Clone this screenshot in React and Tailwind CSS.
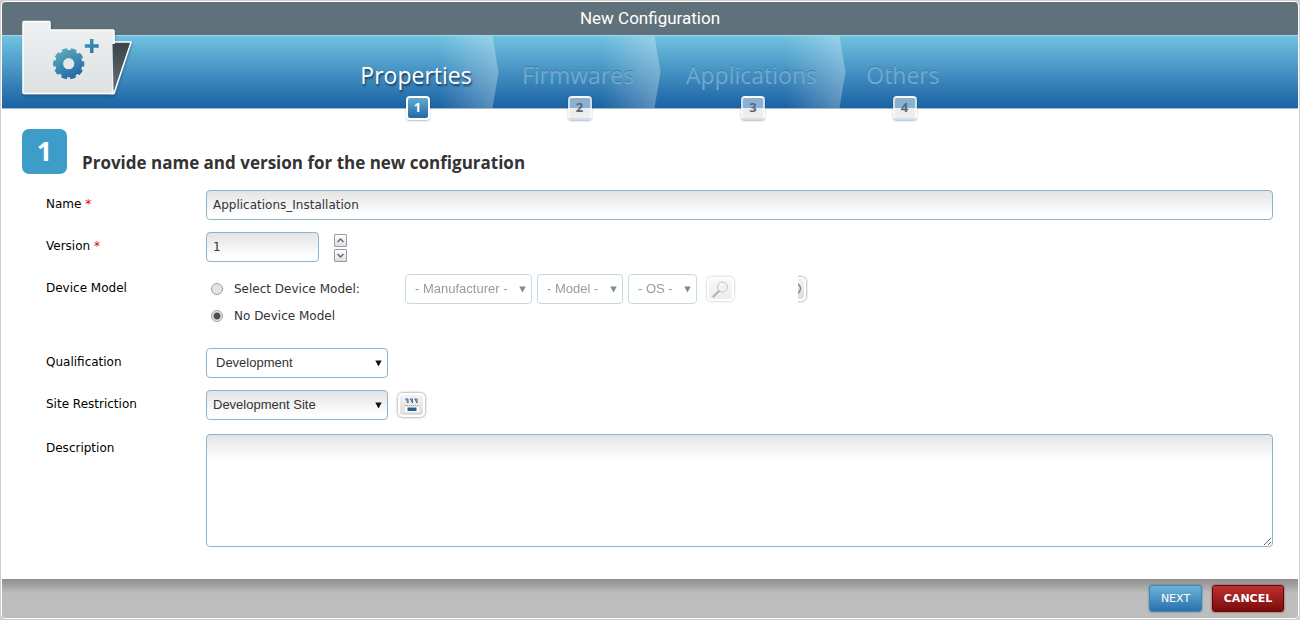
import React, { useState } from "react";
import clsx from "clsx";

const STEPS = [
    { id: 1, title: "Properties", width: "w-[162px]" },
    { id: 2, title: "Firmwares", width: "w-[162px]" },
    { id: 3, title: "Applications", width: "w-[185px]" },
    { id: 4, title: "Others", width: "w-[118px]" },
];

const fieldClass =
    "rounded-[4px] border border-[#8db4c8] bg-white bg-linear-to-b from-[#e4e4e4] to-white to-[24px] text-[#333] outline-none";

const FolderIcon = () => (
    <svg className="absolute left-[20px] top-[17px]" width="116" height="84" viewBox="0 0 116 84" aria-hidden="true">
        <defs>
            <linearGradient id="front" x1="0" y1="0" x2="0" y2="1">
                <stop offset="0" stopColor="#eff1f2" />
                <stop offset="1" stopColor="#dde1e2" />
            </linearGradient>
            <linearGradient id="back" x1="0" y1="0" x2="0" y2="1">
                <stop offset="0" stopColor="#39444b" />
                <stop offset="1" stopColor="#647078" />
            </linearGradient>
            <linearGradient id="gear" x1="38" y1="29" x2="54" y2="60" gradientUnits="userSpaceOnUse">
                <stop offset="0" stopColor="#5ab0b8" />
                <stop offset="1" stopColor="#2162a6" />
            </linearGradient>
            <linearGradient id="plus" x1="63" y1="20" x2="77" y2="34" gradientUnits="userSpaceOnUse">
                <stop offset="0" stopColor="#3e9ab8" />
                <stop offset="1" stopColor="#2f6fa4" />
            </linearGradient>
            <filter id="shade" x="-10%" y="-10%" width="120%" height="125%">
                <feDropShadow dx="0" dy="2" stdDeviation="1.5" floodColor="#0b3355" floodOpacity="0.5" />
            </filter>
        </defs>
        <g filter="url(#shade)" stroke="#fff" strokeWidth="1.5" strokeLinejoin="round">
            <path d="M91 23h18L92 74.500h-3z" fill="url(#back)" />
            <path d="M1 3.500q0-1 1-1h25q1 0 1 1V11h63q1 0 1 1v12l-1 50.500H2q-1 0-1-1z" fill="url(#front)" />
        </g>
        <path d="M90.500 25h17L91.500 72z" fill="url(#back)" />
        {/* gear body, then its ten teeth as a dashed ring */}
        <circle cx="46.700" cy="44.700" r="9.600" fill="none" stroke="url(#gear)" strokeWidth="8" />
        <circle
            cx="46.700"
            cy="44.700"
            r="14"
            fill="none"
            stroke="url(#gear)"
            strokeWidth="3.200"
            strokeDasharray="5.600 3.196"
            strokeDashoffset="2.800"
        />
        <path d="M68 20h3.500v5.200h5.200v3.500h-5.200v5.200H68v-5.200h-5.200v-3.500H68z" fill="url(#plus)" />
    </svg>
);

const Step = ({ step, active, last }) => (
    <li className={clsx("relative flex justify-center pt-[23px]", step.width)}>
        {!last && (
            <span className="absolute inset-y-0 right-0 w-[60px] bg-linear-to-r from-white/0 to-white/30 [clip-path:polygon(0_0,54px_0,100%_50%,54px_100%,0_100%)]" />
        )}
        <a
            href={`#step-${step.id}`}
            aria-current={active ? "step" : undefined}
            className={clsx(
                "relative pr-[3px] font-['Open_Sans',sans-serif] text-[23px] leading-8",
                active ? "text-white [text-shadow:1px_2px_2px_#173f63]" : "text-[#6fa9ce] [text-shadow:0_-1px_0_#3d7fae]"
            )}
        >
            {step.title}
        </a>
        <span
            className={clsx(
                "absolute -bottom-3 left-1/2 -ml-3 flex h-6 w-6 items-center justify-center rounded-[4px] border-2 font-['Open_Sans',sans-serif] text-[13px] font-bold shadow-[0_1px_2px_#0004]",
                active
                    ? "border-white bg-linear-to-b from-[#62abcf] to-[#2269a8] text-white"
                    : "border-white/60 bg-linear-to-b from-[#8bb0d2] from-50% to-[#eee] to-50% text-[#56697c]"
            )}
        >
            {step.id}
        </span>
    </li>
);

const Select = ({ label, id, value, className, wrapClass, disabled }) => (
    <span className={clsx("relative block", wrapClass, disabled && "opacity-50")}>
        <select
            id={id}
            aria-label={label}
            disabled={disabled}
            defaultValue={value}
            className={clsx(
                "block h-[30px] w-full appearance-none rounded-[4px] border border-[#8db4c8] font-['Liberation_Sans',sans-serif] text-[13px] text-[#333] outline-none",
                className
            )}
        >
            <option>{value}</option>
        </select>
        <svg className="pointer-events-none absolute right-[6px] top-3 h-[7px] w-[7px]" viewBox="0 0 7 7" aria-hidden="true">
            <path d="M.3 .5h6.400L3.500 6.500z" fill="#111" />
        </svg>
    </span>
);

const IconButton = ({ label, disabled, children }) => (
    <button
        type="button"
        aria-label={label}
        disabled={disabled}
        className={clsx(
            "flex h-6 w-[27px] shrink-0 items-center justify-center rounded-[5px] border-2 border-white bg-linear-to-b from-[#f4f4f4] to-[#dcdcdc] shadow-[0_0_2px_1px_#0004]",
            disabled && "opacity-50"
        )}
    >
        {children}
    </button>
);

const SpinButton = ({ label, onClick, path }) => (
    <button
        type="button"
        aria-label={label}
        onClick={onClick}
        className="flex h-[13px] w-[13px] items-center justify-center rounded-[1px] border border-[#9a9aa6] bg-linear-to-b from-white to-[#dddde4]"
    >
        <svg width="7" height="5" viewBox="0 0 7 5" fill="none" stroke="#666672" strokeWidth="1.400" aria-hidden="true">
            <path d={path} />
        </svg>
    </button>
);

const Row = ({ label, htmlFor, required, className, children }) => (
    <div className={clsx("flex items-start", className)}>
        <label htmlFor={htmlFor} className="w-[160px] shrink-0 pt-1 leading-5 text-black">
            {label} {required && <span className="text-[#d00]">*</span>}
        </label>
        <div className="flex min-w-0 flex-1 items-center">{children}</div>
    </div>
);

const radioClass =
    "ml-[5px] mr-[11px] h-3 w-3 appearance-none rounded-full border border-[#a0a0a0] bg-[#e4e4e4] checked:bg-[radial-gradient(circle,#505050_3px,#e8e8e8_4px)]";

const App = () => {
    const [name, setName] = useState("Applications_Installation");
    const [version, setVersion] = useState(1);
    const [hasModel, setHasModel] = useState(false);

    return (
        <div className="flex min-h-screen flex-col bg-[#cfcfcf] p-px font-['DejaVu_Sans',sans-serif] text-[12px]">
            <div className="flex flex-1 flex-col overflow-hidden rounded-[5px] border border-white bg-white">
                <header className="relative">
                    <h1 className="bg-[#5f717a] text-center font-[Roboto,sans-serif] text-[17px] leading-[33px] text-white">
                        New Configuration
                    </h1>
                    <nav className="border-y border-t-[#a5d5e8] border-b-[#a9b9c8] bg-linear-to-b from-[#70c2e0] to-[#1a62a3]">
                        <ol className="flex h-[72px] justify-center">
                            {STEPS.map(step => (
                                <Step key={step.id} step={step} active={step.id === 1} last={step.id === 4} />
                            ))}
                        </ol>
                    </nav>
                    <FolderIcon />
                </header>

                <main className="flex-1 pb-8 pl-5 pr-[25px] pt-5">
                    <div className="flex h-[45px] items-end gap-[15px]">
                        <span className="flex h-[45px] w-[45px] items-center justify-center rounded-[7px] bg-[#3d9dc8] font-['Open_Sans',sans-serif] text-[27px] font-bold text-white">
                            1
                        </span>
                        <h2 className="font-['Open_Sans',sans-serif] text-[17px] font-bold leading-[22px] text-[#333]">
                            Provide name and version for the new configuration
                        </h2>
                    </div>

                    <form className="flex flex-col gap-3 pl-6 pt-4">
                        <Row label="Name" htmlFor="name" required>
                            <input
                                id="name"
                                type="text"
                                value={name}
                                onChange={e => setName(e.target.value)}
                                className={clsx(fieldClass, "h-[30px] w-full px-[6px]")}
                            />
                        </Row>
                        <Row label="Version" htmlFor="version" required>
                            <input
                                id="version"
                                type="text"
                                value={version}
                                onChange={e => setVersion(Number(e.target.value) || 1)}
                                className={clsx(fieldClass, "h-[30px] w-[113px] px-[6px]")}
                            />
                            <div className="ml-[15px] flex flex-col gap-[2px] pt-[2px]">
                                <SpinButton label="Increase version" onClick={() => setVersion(version + 1)} path="M.5 4L3.500 1 6.500 4" />
                                <SpinButton label="Decrease version" onClick={() => setVersion(version - 1)} path="M.5 1L3.500 4 6.500 1" />
                            </div>
                        </Row>
                        <Row label="Device Model" htmlFor="with-model">
                            <div className="pb-2 text-[#333]">
                                <div className="flex h-[30px] items-center">
                                    <label className="flex w-[199px] items-center">
                                        <input
                                            id="with-model"
                                            type="radio"
                                            name="model"
                                            checked={hasModel}
                                            onChange={() => setHasModel(true)}
                                            className={radioClass}
                                        />
                                        Select Device Model:
                                    </label>
                                    <div className="flex gap-[5px]">
                                        <Select label="Manufacturer" value="- Manufacturer -" wrapClass="w-[127px]" className="pl-[9px]" disabled={!hasModel} />
                                        <Select label="Model" value="- Model -" wrapClass="w-[86px]" className="pl-[9px]" disabled={!hasModel} />
                                        <Select label="OS" value="- OS -" wrapClass="w-[69px]" className="pl-[9px]" disabled={!hasModel} />
                                    </div>
                                    <div className="ml-[10px] mr-[64px]">
                                        <IconButton label="Search device model" disabled={!hasModel}>
                                            <svg width="17" height="17" viewBox="0 0 17 17" aria-hidden="true">
                                                <path d="M7 10L1.500 15.500" stroke="#666" strokeWidth="2.200" strokeLinecap="round" />
                                                <circle cx="10.500" cy="6" r="5" fill="#d9ebf5" stroke="#888" strokeWidth="1" />
                                                <path d="M8 5q1-2 3-2" stroke="#fff" strokeWidth="1.200" fill="none" />
                                            </svg>
                                        </IconButton>
                                    </div>
                                    {/* only the right edge of the help button stays visible */}
                                    <div className="flex w-[10px] justify-end overflow-hidden py-1 pr-[2px]">
                                        <IconButton label="Help">
                                            <svg width="19" height="17" viewBox="0 0 19 17" fill="none" stroke="#888" strokeWidth="1.500" aria-hidden="true">
                                                <circle cx="12.500" cy="7.500" r="5" />
                                            </svg>
                                        </IconButton>
                                    </div>
                                </div>
                                <label className="flex h-6 w-[199px] items-center">
                                    <input
                                        type="radio"
                                        name="model"
                                        checked={!hasModel}
                                        onChange={() => setHasModel(false)}
                                        className={radioClass}
                                    />
                                    No Device Model
                                </label>
                            </div>
                        </Row>
                        <Row label="Qualification" htmlFor="qualification">
                            <Select id="qualification" value="Development" wrapClass="w-[182px]" className="bg-white pl-[9px]" />
                        </Row>
                        <Row label="Site Restriction" htmlFor="site">
                            <Select
                                id="site"
                                value="Development Site"
                                wrapClass="w-[182px] mr-[10px]"
                                className="bg-linear-to-b from-[#e4e4e4] to-white to-[24px] pl-[6px]"
                            />
                            <IconButton label="Choose sites">
                                <svg width="16" height="14" viewBox="0 0 16 14" aria-hidden="true">
                                    <path d="M1.500 1h2.500v4M6 1h2.500v4M10.500 1H13v4M2 1l2 4M6.500 1l2 4M11 1l2 4" stroke="#3d6b94" fill="none" />
                                    <path d="M1 7.500h14" stroke="#8aa5bb" strokeDasharray="1 1" />
                                    <path d="M1 9h14v5H1z" fill="#fff" />
                                    <path d="M3.500 9.500h9v3.500h-9z" fill="#2d5c85" />
                                </svg>
                            </IconButton>
                        </Row>
                        <Row label="Description" htmlFor="description" className="mt-[2px]">
                            <textarea id="description" className={clsx(fieldClass, "block h-[113px] w-full resize-y p-[6px]")} />
                        </Row>
                    </form>
                </main>

                <footer className="flex justify-end gap-[10px] bg-[#bdbdbd] bg-linear-to-b from-[#8e8e8e] to-[#bdbdbd] to-[14px] px-[14px] py-[6px]">
                    <button
                        type="button"
                        className="h-[27px] w-[53px] rounded-[3px] border border-[#4d81a8] bg-linear-to-b from-[#69b6d8] to-[#2a70ac] pt-[2px] font-['DejaVu_Sans',sans-serif] text-[11px] text-white shadow-[0_0_2px_#2a70ac]"
                    >
                        NEXT
                    </button>
                    <button
                        type="button"
                        className="h-[27px] w-[72px] rounded-[3px] border border-[#5c0a0a] bg-linear-to-b from-[#c03030] to-[#7a0b0b] pt-[2px] font-['DejaVu_Sans',sans-serif] text-[11px] font-bold text-white shadow-[0_0_2px_#b00]"
                    >
                        CANCEL
                    </button>
                </footer>
            </div>
        </div>
    );
};

export default App;
